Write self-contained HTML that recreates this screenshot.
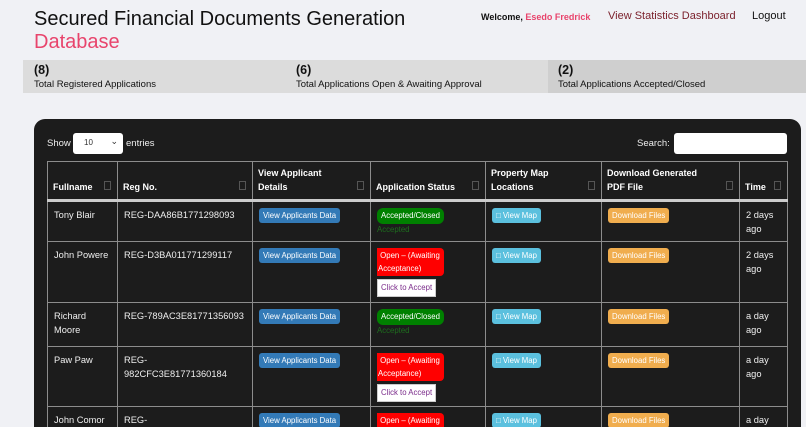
<!DOCTYPE html>
<html><head><meta charset="utf-8"><style>
*{margin:0;padding:0;box-sizing:border-box}
html,body{width:806px;height:427px;overflow:hidden}
body{background:#f0f1f5;font-family:"Liberation Sans",Arial,sans-serif;position:relative}
.abs{position:absolute}
.t1{left:34px;top:8px;font-size:20px;color:#111;line-height:23px}
.t2{left:34px;top:31px;font-size:20px;color:#e8446c;line-height:23px}
.nav{top:9px;font-size:11px;line-height:14px}
.stats{left:23px;top:60px;width:783px;height:33px;background:#dcdcdc}
.s3{left:548px;top:60px;width:258px;height:33px;background:#cfcfcf}
.st{font-size:9.5px;color:#111;line-height:13px;white-space:nowrap}
.st b{font-size:12.5px;display:block;line-height:16px}
.clip{left:0;top:0;width:806px;height:427px;overflow:hidden}
.panel{left:34px;top:119px;width:767px;height:308px;background:#1c1c1c;border-radius:11px 11px 0 0}
table{position:absolute;left:47px;top:161px;border-collapse:collapse;table-layout:fixed;color:#eee;font-size:9.3px}
td,th{border:1px solid #8c8c8c;vertical-align:top;padding:6px 5px 0 6px;line-height:14px;text-align:left;overflow:hidden}
th{vertical-align:bottom;font-weight:bold;padding:4px 5px 5px 5px;position:relative;color:#fff;font-size:9px}
th:after{content:"";position:absolute;right:6px;bottom:9px;width:5px;height:7px;border:1px solid #555}
thead tr{border-bottom:3px solid #ccc}
.btn{display:inline-block;font-size:7.8px;color:#fff;padding:2px 4px;border-radius:3px;line-height:11px;white-space:nowrap}
.blue{background:#337ab7}.cyan{background:#5bc0de}.orange{background:#f0ad4e}
.acc{display:inline-block;background:#008000;color:#fff;font-size:7.8px;padding:2px 4px;border-radius:6px;line-height:12px;white-space:nowrap}
.accs{color:#1e6e1e;font-size:7.8px;line-height:12px}
.open{display:inline-block;background:#f00;color:#fff;font-size:7.8px;padding:1px 0 1px 1px;border-radius:0 4px 4px 0;line-height:13px;width:67px;white-space:normal}
.cta{display:inline-block;background:#fff;color:#7a2a8a;font-size:7.8px;padding:2px 3px;line-height:12px;margin-top:3px;border:1px solid #ccc;white-space:nowrap}
</style></head><body>
<div class="abs t1">Secured Financial Documents Generation</div>
<div class="abs t2">Database</div>
<div class="abs nav" style="left:481px;font-size:9px;top:10px"><b style="color:#111">Welcome,</b> <b style="color:#e8446c">Esedo Fredrick</b></div>
<div class="abs nav" style="left:608px;color:#7a1f2a">View Statistics Dashboard</div>
<div class="abs nav" style="left:752px;color:#111">Logout</div>
<div class="abs stats"></div><div class="abs s3"></div>
<div class="abs st" style="left:34px;top:62px"><b>(8)</b>Total Registered Applications</div>
<div class="abs st" style="left:296px;top:62px"><b>(6)</b>Total Applications Open &amp; Awaiting Approval</div>
<div class="abs st" style="left:558px;top:62px"><b>(2)</b>Total Applications Accepted/Closed</div>
<div class="abs clip">
<div class="abs panel"></div>
<div class="abs" style="left:47px;top:138px;color:#eee;font-size:9.5px">Show</div>
<div class="abs" style="left:73px;top:133px;width:50px;height:21px;background:#fff;border-radius:3px;font-size:8px;color:#333;padding:5px 0 0 11px">10<span style="position:absolute;right:5px;top:3px;font-size:9px">&#8964;</span></div>
<div class="abs" style="left:126px;top:138px;color:#eee;font-size:9.5px">entries</div>
<div class="abs" style="left:637px;top:138px;color:#eee;font-size:9.5px">Search:</div>
<div class="abs" style="left:674px;top:133px;width:113px;height:21px;background:#fff;border-radius:3px"></div>
<table>
<colgroup><col style="width:70px"><col style="width:135px"><col style="width:118px"><col style="width:115px"><col style="width:116px"><col style="width:138px"><col style="width:48px"></colgroup>
<thead><tr style="height:38px"><th>Fullname</th><th>Reg No.</th><th>View Applicant<br>Details</th><th>Application Status</th><th>Property Map<br>Locations</th><th>Download Generated<br>PDF File</th><th>Time</th></tr></thead>
<tbody>
<tr style="height:41px"><td>Tony Blair</td><td>REG-DAA86B1771298093</td><td><span class="btn blue">View Applicants Data</span></td><td><span class="acc">Accepted/Closed</span><div class="accs">Accepted</div></td><td><span class="btn cyan">&#9633; View Map</span></td><td><span class="btn orange">Download Files</span></td><td>2 days ago</td></tr>
<tr style="height:61px"><td>John Powere</td><td>REG-D3BA011771299117</td><td><span class="btn blue">View Applicants Data</span></td><td><span class="open">&nbsp;Open – (Awaiting Acceptance)</span><br><span class="cta">Click to Accept</span></td><td><span class="btn cyan">&#9633; View Map</span></td><td><span class="btn orange">Download Files</span></td><td>2 days ago</td></tr>
<tr style="height:44px"><td>Richard Moore</td><td>REG-789AC3E81771356093</td><td><span class="btn blue">View Applicants Data</span></td><td><span class="acc">Accepted/Closed</span><div class="accs">Accepted</div></td><td><span class="btn cyan">&#9633; View Map</span></td><td><span class="btn orange">Download Files</span></td><td>a day ago</td></tr>
<tr style="height:60px"><td>Paw Paw</td><td>REG-<br>982CFC3E81771360184</td><td><span class="btn blue">View Applicants Data</span></td><td><span class="open">&nbsp;Open – (Awaiting Acceptance)</span><br><span class="cta">Click to Accept</span></td><td><span class="btn cyan">&#9633; View Map</span></td><td><span class="btn orange">Download Files</span></td><td>a day ago</td></tr>
<tr style="height:60px"><td>John Comor</td><td>REG-</td><td><span class="btn blue">View Applicants Data</span></td><td><span class="open">&nbsp;Open – (Awaiting Acceptance)</span></td><td><span class="btn cyan">&#9633; View Map</span></td><td><span class="btn orange">Download Files</span></td><td>a day ago</td></tr>
</tbody></table>
</div>
</body></html>
